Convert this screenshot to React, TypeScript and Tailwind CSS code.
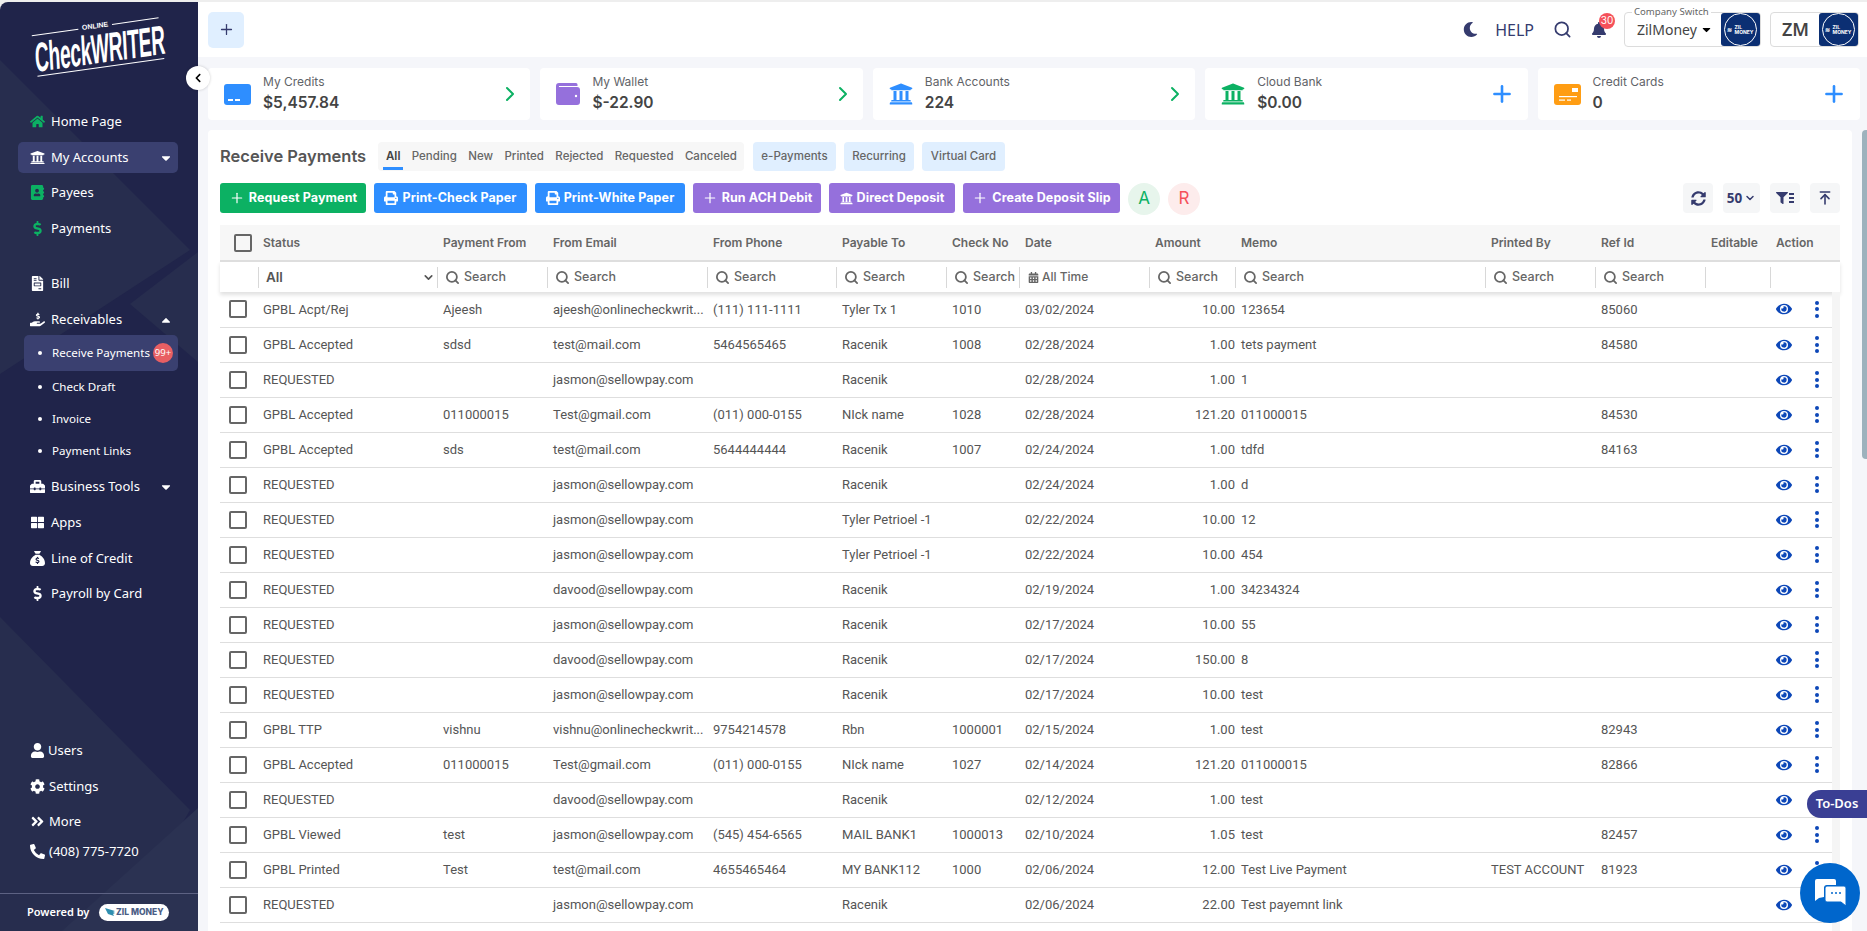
import {
  FaHome,
  FaUniversity,
  FaDollarSign,
  FaFileInvoice,
  FaHandHoldingUsd,
  FaToolbox,
  FaThLarge,
  FaUser,
  FaCog,
  FaAngleDoubleRight,
  FaPhoneAlt,
  FaPrint,
  FaMoon,
  FaBell,
  FaEye,
  FaSyncAlt,
  FaFilter,
  FaCaretDown,
  FaCaretUp,
  FaCalendarAlt,
  FaChevronLeft,
  FaAddressBook,
} from "react-icons/fa";
import { FaSackDollar } from "react-icons/fa6";
import { ChevronRight, ChevronDown, Plus, Search, ArrowUpToLine } from "lucide-react";

const COLS = [38, 179, 110, 160, 129, 110, 73, 130, 86, 250, 110, 110, 65];

const HEADERS = ["Status", "Payment From", "From Email", "From Phone", "Payable To", "Check No", "Date", "Amount", "Memo", "Printed By", "Ref Id", "Editable", "Action"];

const J = "jasmon@sellowpay.com";
const D = "davood@sellowpay.com";
const V = "vishnu@onlinecheckwrit...";

// status, from, email, phone, payable, check, date, amount, memo, printed, ref
const ROWS = [
  ["GPBL Acpt/Rej", "Ajeesh", "ajeesh@onlinecheckwrit...", "(111) 111-1111", "Tyler Tx 1", "1010", "03/02/2024", "10.00", "123654", "", "85060"],
  ["GPBL Accepted", "sdsd", "test@mail.com", "5464565465", "Racenik", "1008", "02/28/2024", "1.00", "tets payment", "", "84580"],
  ["REQUESTED", "", J, "", "Racenik", "", "02/28/2024", "1.00", "1", "", ""],
  ["GPBL Accepted", "011000015", "Test@gmail.com", "(011) 000-0155", "NIck name", "1028", "02/28/2024", "121.20", "011000015", "", "84530"],
  ["GPBL Accepted", "sds", "test@mail.com", "5644444444", "Racenik", "1007", "02/24/2024", "1.00", "tdfd", "", "84163"],
  ["REQUESTED", "", J, "", "Racenik", "", "02/24/2024", "1.00", "d", "", ""],
  ["REQUESTED", "", J, "", "Tyler Petrioel -1", "", "02/22/2024", "10.00", "12", "", ""],
  ["REQUESTED", "", J, "", "Tyler Petrioel -1", "", "02/22/2024", "10.00", "454", "", ""],
  ["REQUESTED", "", D, "", "Racenik", "", "02/19/2024", "1.00", "34234324", "", ""],
  ["REQUESTED", "", J, "", "Racenik", "", "02/17/2024", "10.00", "55", "", ""],
  ["REQUESTED", "", D, "", "Racenik", "", "02/17/2024", "150.00", "8", "", ""],
  ["REQUESTED", "", J, "", "Racenik", "", "02/17/2024", "10.00", "test", "", ""],
  ["GPBL TTP", "vishnu", V, "9754214578", "Rbn", "1000001", "02/15/2024", "1.00", "test", "", "82943"],
  ["GPBL Accepted", "011000015", "Test@gmail.com", "(011) 000-0155", "NIck name", "1027", "02/14/2024", "121.20", "011000015", "", "82866"],
  ["REQUESTED", "", D, "", "Racenik", "", "02/12/2024", "1.00", "test", "", ""],
  ["GPBL Viewed", "test", J, "(545) 454-6565", "MAIL BANK1", "1000013", "02/10/2024", "1.05", "test", "", "82457"],
  ["GPBL Printed", "Test", "test@mail.com", "4655465464", "MY BANK112", "1000", "02/06/2024", "12.00", "Test Live Payment", "TEST ACCOUNT", "81923"],
  ["REQUESTED", "", J, "", "Racenik", "", "02/06/2024", "22.00", "Test payemnt link", "", ""],
  // only the top of this row's checkbox is in the window
  ["", "", "", "", "", "", "", "", "", "", ""],
];

function Cols({ last }: { last: number }) {
  return (
    <colgroup>
      {COLS.map((w, i) => (
        <col key={i} style={{ width: w }} />
      ))}
      <col style={{ width: last }} />
    </colgroup>
  );
}

function ZilBadge() {
  return (
    <div className="flex h-[33px] w-[39px] items-center justify-center rounded-[3px] bg-[#0b2f73]">
      <div className="flex h-[33px] w-[33px] items-center justify-center rounded-full border border-white font-['Inter',sans-serif] text-[5px] font-bold leading-[5px] text-white">
        <span className="mr-[2px] text-[6px]">≋</span>
        <span>
          ZIL
          <br />
          MONEY
        </span>
      </div>
    </div>
  );
}

function NavItem({
  icon,
  label,
  green,
  active,
  caret,
  labelClass = "",
  className = "",
}: {
  icon: React.ReactNode;
  label: string;
  green?: boolean;
  active?: boolean;
  caret?: "up" | "down";
  labelClass?: string;
  className?: string;
}) {
  return (
    <div
      className={`ml-[18px] mr-[20px] flex h-[31px] items-center rounded-[5px] pl-[8px] pr-[5px] ${active ? "bg-[#3a4070]" : ""} ${className}`}
    >
      <span className={`flex w-[25px] shrink-0 justify-center pr-[3px] text-[15px] ${green ? "text-[#0cb163]" : "text-white"}`}>{icon}</span>
      <span className={`text-[13px] text-white ${labelClass}`}>{label}</span>
      {caret === "down" && <FaCaretDown className="ml-auto text-[14px] text-white" />}
      {caret === "up" && <FaCaretUp className="ml-auto text-[14px] text-white" />}
    </div>
  );
}

function SubItem({ label, active, badge }: { label: string; active?: boolean; badge?: string }) {
  return (
    <div className={`ml-[24px] mr-[20px] flex items-center rounded-[5px] pl-[14px] ${active ? "h-[36px] bg-[#3a4070]" : "h-[32px]"}`}>
      <span className="h-[4px] w-[4px] rounded-full bg-white" />
      <span className="ml-[10px] text-[11.6px] text-white">{label}</span>
      {badge && (
        <span className="ml-[3px] flex h-[20px] w-[20px] items-center justify-center rounded-full bg-[#e85f63] text-[9.5px] text-white">
          {badge}
        </span>
      )}
    </div>
  );
}

function Logo() {
  return (
    <div className="mx-auto mt-[20px] h-[64px] w-[128px] -rotate-[8deg] font-['Liberation_Sans',sans-serif] text-white">
      <div className="flex items-center">
        <span className="h-px flex-1 bg-white" />
        <span className="px-[4px] text-[7px] font-bold leading-[8px]">ONLINE</span>
        <span className="h-px flex-1 bg-white" />
      </div>
      <div className="h-[37px] origin-left whitespace-nowrap text-[41px] font-bold leading-[38px] tracking-[-0.5px] [transform:scaleX(0.47)_skewX(-10deg)]">
        CheckWRITER
      </div>
      <div className="h-px bg-white" />
    </div>
  );
}

function Sidebar() {
  return (
    <aside className="relative flex h-full w-[198px] shrink-0 flex-col overflow-hidden rounded-tl-[8px] bg-[#20244a] font-['Noto_Sans',sans-serif]">
      <svg className="absolute inset-0 h-full w-full" viewBox="0 0 198 929" preserveAspectRatio="none">
        <polygon points="0,58 190,248 0,372" fill="#272d4e" />
        <polygon points="198,250 130,302 198,360" fill="#272d4e" />
        <polygon points="0,615 190,808 120,929 0,929" fill="#272d4e" />
        <polygon points="198,806 62,929 198,929" fill="#2b3252" />
      </svg>
      <div className="relative flex h-full flex-col">
        <Logo />

        <div className="mt-[20px]">
          <NavItem icon={<FaHome />} label="Home Page" green className="mb-[5px]" />
          <NavItem icon={<FaUniversity />} label="My Accounts" active caret="down" className="mb-[4px]" />
          <NavItem icon={<FaAddressBook />} label="Payees" green className="mb-[5px]" />
          <NavItem icon={<FaDollarSign />} label="Payments" green className="mb-[24px]" />
          <NavItem icon={<FaFileInvoice />} label="Bill" className="mb-[5px]" />
          <NavItem icon={<FaHandHoldingUsd />} label="Receivables" caret="up" />
          <SubItem label="Receive Payments" active badge="99+" />
          <SubItem label="Check Draft" />
          <SubItem label="Invoice" />
          <SubItem label="Payment Links" />
          <NavItem icon={<FaToolbox />} label="Business Tools" caret="down" className="mt-[4px] mb-[5px]" />
          <NavItem icon={<FaThLarge className="text-[13px]" />} label="Apps" className="mb-[5px]" />
          <NavItem icon={<FaSackDollar />} label="Line of Credit" className="mb-[4px]" />
          <NavItem icon={<FaDollarSign />} label="Payroll by Card" />
        </div>

        <div className="mt-auto">
          <NavItem icon={<FaUser />} label="Users" labelClass="ml-[-3px]" className="mb-[5px]" />
          <NavItem icon={<FaCog />} label="Settings" labelClass="ml-[-2px]" className="mb-[4px]" />
          <NavItem icon={<FaAngleDoubleRight />} label="More" labelClass="ml-[-2px]" />
          <NavItem icon={<FaPhoneAlt />} label="(408) 775-7720" labelClass="ml-[-2px]" className="-mt-[1px]" />
          <div className="mt-[26px] flex h-[38px] items-center border-t border-[#5d6283] pl-[27px]">
            <span className="text-[11px] font-semibold text-white">Powered by</span>
            <span className="ml-[10px] flex h-[17px] w-[70px] items-center justify-center gap-[1px] rounded-full bg-white font-['Inter',sans-serif] text-[8.5px] font-extrabold text-[#4b5d85]">
              <svg width="10" height="9" viewBox="0 0 10 9">
                <path d="M0 0l10 3-2 1 2 1-2 1 1 2L3 6z" fill="#2f8fb0" />
              </svg>
              ZIL MONEY
            </span>
          </div>
        </div>
      </div>
    </aside>
  );
}

function Header() {
  return (
    <header className="flex h-[55px] shrink-0 items-center bg-white pl-[10px] pr-[8px]">
      <button className="flex h-[36px] w-[36px] items-center justify-center rounded-[5px] bg-[#e0efff] text-[#353b6e]">
        <Plus size={17} strokeWidth={1.8} />
      </button>
      <FaMoon className="ml-auto text-[15px] text-[#353b6e]" />
      <span className="ml-[17px] font-['Noto_Sans',sans-serif] text-[16px] text-[#353b6e]">HELP</span>
      <Search size={19} strokeWidth={2.2} className="ml-[19px] text-[#353b6e]" />
      <div className="relative ml-[19px]">
        <FaBell className="text-[16px] text-[#353b6e]" />
        <span className="absolute left-[8px] top-[-9px] flex h-[16px] w-[16px] items-center justify-center rounded-full bg-[#f5515a] text-[10px] text-white">
          30
        </span>
      </div>
      <div className="relative ml-[17px] flex h-[35px] w-[137px] items-center justify-between rounded-[4px] border border-[#dcdcdc] pl-[12px]">
        <span className="absolute left-[7px] top-[-7px] bg-white px-[2px] font-['Noto_Sans',sans-serif] text-[9.6px] leading-[12px] text-[#666]">
          Company Switch
        </span>
        <span className="flex items-center font-['Noto_Sans',sans-serif] text-[14px] text-[#444]">
          ZilMoney
          <FaCaretDown className="ml-[3px] text-[13px] text-black" />
        </span>
        <ZilBadge />
      </div>
      <div className="ml-[9px] flex h-[35px] w-[89px] items-center justify-between rounded-[4px] border border-[#dcdcdc] pl-[11px]">
        <span className="font-['Noto_Sans',sans-serif] text-[18px] font-semibold text-[#444]">ZM</span>
        <ZilBadge />
      </div>
    </header>
  );
}

function CreditsIcon() {
  return (
    <div className="flex h-[21px] w-[27px] items-end gap-[2px] rounded-[3px] bg-[#2e8eff] pb-[4px] pl-[4px]">
      <span className="h-[1.5px] w-[5px] bg-white" />
      <span className="h-[1.5px] w-[5px] bg-white" />
    </div>
  );
}

function WalletIcon() {
  return (
    <svg width="24" height="22" viewBox="0 0 24 22">
      <path d="M3 0h17a1.5 1.5 0 0 1 1.5 1.5V3H3a1.5 1.5 0 0 0 0 1h18a3 3 0 0 1 3 3v12a3 3 0 0 1-3 3H3a3 3 0 0 1-3-3V3a3 3 0 0 1 3-3z" fill="#9570dc" />
      <circle cx="20" cy="13" r="1.2" fill="#fff" />
    </svg>
  );
}

function CardIcon() {
  return (
    <svg width="27" height="21" viewBox="0 0 27 21">
      <rect width="27" height="21" rx="3" fill="#ff9d13" />
      <rect x="18" y="4" width="6" height="4" fill="#fff" />
      <rect x="5" y="12" width="18" height="1.2" fill="#fff" />
      <rect x="5" y="15.5" width="6" height="1.2" fill="#fff" />
      <rect x="13" y="15.5" width="4" height="1.2" fill="#fff" />
    </svg>
  );
}

function StatCard({ icon, label, value, action }: { icon: React.ReactNode; label: string; value: string; action: "go" | "add" }) {
  return (
    <div className="flex h-[52px] items-center rounded-[4px] bg-white pl-[16px] pr-[16px] font-['Inter',sans-serif]">
      <div className="flex justify-center">{icon}</div>
      <div className="ml-[12px] flex flex-col">
        <span className="text-[12px] leading-[16px] text-[#5f6368]">{label}</span>
        <span className="mt-[2px] text-[15.5px] font-semibold leading-[22px] text-[#444]">{value}</span>
      </div>
      {action === "go" ? (
        <ChevronRight size={24} strokeWidth={2} className="ml-auto mr-[-8px] text-[#0cb163]" />
      ) : (
        <Plus size={26} strokeWidth={2.4} className="ml-auto mr-[-3px] text-[#2e8eff]" />
      )}
    </div>
  );
}

function ActionButton({ icon, label, color, w }: { icon: React.ReactNode; label: string; color: string; w: string }) {
  return (
    <button className={`flex h-[30px] items-center justify-center gap-[4px] rounded-[3px] text-[12.5px] font-bold tracking-[0.1px] text-white ${color} ${w}`}>
      {icon}
      {label}
    </button>
  );
}

function ToolBtn({ children, w = "w-[30px]" }: { children: React.ReactNode; w?: string }) {
  return <div className={`flex h-[30px] ${w} items-center justify-center rounded-[4px] bg-[#f5f6f7] text-[#353b6e]`}>{children}</div>;
}

function SearchCell() {
  return (
    <div className="flex items-center gap-[4px] pl-[7px] text-[12.5px] font-medium text-[#666]">
      <Search size={15} strokeWidth={2.8} />
      <span>Search</span>
    </div>
  );
}

function Toolbar() {
  return (
    <>
      <div className="flex items-center">
        <h1 className="w-[158px] text-[16.5px] font-semibold text-[#555]">Receive Payments</h1>
        <div className="flex h-[29px] w-[366px] items-center justify-between rounded-[4px] bg-[#f7f7f7] pl-[8px] pr-[7px] text-[11.5px] font-medium text-[#666]">
          <span className="relative font-semibold text-[#444]">
            All
            <span className="absolute bottom-[-5px] left-[-3px] right-[-3px] h-[3px] bg-[#2e8eff]" />
          </span>
          <span>Pending</span>
          <span>New</span>
          <span>Printed</span>
          <span>Rejected</span>
          <span>Requested</span>
          <span>Canceled</span>
        </div>
        <div className="ml-[9px] flex gap-[8px] text-[11.5px] font-medium text-[#666]">
          <span className="flex h-[29px] w-[83px] items-center justify-center rounded-[4px] bg-[#e0efff]">e-Payments</span>
          <span className="flex h-[29px] w-[70px] items-center justify-center rounded-[4px] bg-[#e0efff]">Recurring</span>
          <span className="flex h-[29px] w-[83px] items-center justify-center rounded-[4px] bg-[#e0efff]">Virtual Card</span>
        </div>
      </div>
      <div className="mt-[12px] flex items-start gap-[8px]">
        <ActionButton icon={<Plus size={16} strokeWidth={1.8} />} label="Request Payment" color="bg-[#0cb163]" w="w-[146px]" />
        <ActionButton icon={<FaPrint className="text-[14px]" />} label="Print-Check Paper" color="bg-[#2e8eff]" w="w-[153px]" />
        <ActionButton icon={<FaPrint className="text-[14px]" />} label="Print-White Paper" color="bg-[#2e8eff]" w="w-[150px]" />
        <ActionButton icon={<Plus size={16} strokeWidth={1.8} />} label="Run ACH Debit" color="bg-[#9570dc]" w="w-[128px]" />
        <ActionButton icon={<FaUniversity className="text-[13px]" />} label="Direct Deposit" color="bg-[#9570dc]" w="w-[126px]" />
        <ActionButton icon={<Plus size={16} strokeWidth={1.8} />} label="Create Deposit Slip" color="bg-[#9570dc]" w="w-[157px]" />
        <span className="flex h-[32px] w-[32px] items-center justify-center rounded-full bg-[#e7f5ec] text-[17px] text-[#0cb163]">A</span>
        <span className="flex h-[32px] w-[32px] items-center justify-center rounded-full bg-[#fdecec] text-[17px] text-[#f5515a]">R</span>
        <div className="ml-auto flex gap-[10px]">
          <ToolBtn>
            <FaSyncAlt className="text-[15px]" />
          </ToolBtn>
          <ToolBtn w="w-[37px]">
            <span className="flex items-center font-['Noto_Sans',sans-serif] text-[13.5px] font-bold">
              50
              <ChevronDown size={12} strokeWidth={3} className="ml-[2px]" />
            </span>
          </ToolBtn>
          <ToolBtn>
            <span className="flex items-center">
              <FaFilter className="text-[12px]" />
              <span className="ml-[1px] flex flex-col gap-[2px]">
                <span className="h-[2px] w-[5px] bg-[#353b6e]" />
                <span className="h-[2px] w-[5px] bg-[#353b6e]" />
                <span className="h-[2px] w-[5px] bg-[#353b6e]" />
              </span>
            </span>
          </ToolBtn>
          <ToolBtn>
            <ArrowUpToLine size={16} strokeWidth={2.4} />
          </ToolBtn>
        </div>
      </div>
    </>
  );
}

function Checkbox({ big }: { big?: boolean }) {
  return <span className={`block h-[18px] w-[18px] rounded-[2px] border-[2px] border-[#666] ${big ? "ml-[14px]" : "ml-[9px]"}`} />;
}

function DataTable() {
  return (
    <div className="mt-[10px] w-[1620px]">
      <table className="w-[1620px] table-fixed border-collapse">
        <Cols last={70} />
        <thead>
          <tr className="h-[36px] border-b-2 border-[#dedede] bg-[#f7f7f7] text-left text-[12px] text-[#666]">
            <th className="p-0 font-semibold">
              <Checkbox big />
            </th>
            {HEADERS.map((h, i) => (
              <th key={h} className={`p-0 font-semibold ${i === 0 ? "pl-[5px]" : "pl-[6px]"}`}>
                {h}
              </th>
            ))}
          </tr>
          <tr className="h-[31px] shadow-[0_3px_4px_rgba(0,0,0,0.12)]">
            <th className="p-0" />
            <th className="p-0 text-left font-normal">
              <div className="flex h-[21px] items-center justify-between border-l border-[#d8d8d8] pl-[7px] pr-[2px] text-[13.5px] font-semibold text-[#555]">
                All
                <ChevronDown size={13} strokeWidth={3} />
              </div>
            </th>
            {HEADERS.slice(1).map((h) => (
              <th key={h} className="p-0 text-left font-normal">
                <div className="flex h-[21px] items-center border-l border-[#d8d8d8]">
                  {h === "Date" ? (
                    <div className="flex items-center gap-[3px] pl-[8px] text-[12px] font-medium text-[#666]">
                      <FaCalendarAlt className="text-[11px]" />
                      All Time
                    </div>
                  ) : h === "Editable" || h === "Action" ? null : (
                    <SearchCell />
                  )}
                </div>
              </th>
            ))}
          </tr>
        </thead>
      </table>
      <div className="flex">
        <table className="w-[1612px] table-fixed border-collapse font-['Roboto',sans-serif] text-[13px] text-[#555]">
          <Cols last={62} />
          <tbody>
            {ROWS.map((r, i) => (
              <tr key={i} className="h-[35px] border-b border-[#dedede]">
                <td className="p-0">
                  <Checkbox />
                </td>
                {r.map((c, j) =>
                  j === 7 ? (
                    <td key={j} className="p-0 text-right">
                      {c}
                    </td>
                  ) : (
                    <td key={j} className={`whitespace-nowrap p-0 ${j === 0 ? "pl-[5px]" : "pl-[6px]"}`}>
                      {c}
                    </td>
                  ),
                )}
                <td className="p-0" />
                <td className="p-0">
                  <div className="flex items-center text-[#0d47b8]">
                    <FaEye className="ml-[6px] text-[16px]" />
                    <span className="ml-[23px] flex flex-col gap-[2.5px]">
                      <span className="h-[4px] w-[4px] rounded-full bg-[#0d47b8]" />
                      <span className="h-[4px] w-[4px] rounded-full bg-[#0d47b8]" />
                      <span className="h-[4px] w-[4px] rounded-full bg-[#0d47b8]" />
                    </span>
                  </div>
                </td>
              </tr>
            ))}
          </tbody>
        </table>
        <div className="w-[8px] bg-[#f5f5f5]" />
      </div>
    </div>
  );
}

export default function App() {
  return (
    <div className="flex h-screen w-full overflow-hidden bg-[#eeeeee] pt-[2px] font-['Inter',sans-serif]">
      <Sidebar />
      <div className="relative flex min-w-0 flex-1 flex-col">
        <Header />
        <div className="flex-1 bg-[#f5f6fa] pl-[10px] pr-[7px] pt-[11px]">
          <div className="grid grid-cols-5 gap-[10px]">
            <StatCard icon={<CreditsIcon />} label="My Credits" value="$5,457.84" action="go" />
            <StatCard icon={<WalletIcon />} label="My Wallet" value="$-22.90" action="go" />
            <StatCard icon={<FaUniversity className="text-[24px] text-[#2e8eff]" />} label="Bank Accounts" value="224" action="go" />
            <StatCard icon={<FaUniversity className="text-[24px] text-[#0cb163]" />} label="Cloud Bank" value="$0.00" action="add" />
            <StatCard icon={<CardIcon />} label="Credit Cards" value="0" action="add" />
          </div>
          <section className="mt-[10px] h-[900px] w-[1644px] rounded-[4px] bg-white px-[12px] pt-[12px]">
            <Toolbar />
            <DataTable />
          </section>
        </div>
        {/* page scrollbar */}
        <div className="absolute right-0 top-[128px] h-[329px] w-[5px] rounded-l-[4px] bg-[#9db2bd]" />
        <div className="absolute right-0 top-[788px] flex h-[28px] w-[60px] items-center justify-center rounded-l-full bg-[#3a3f94] font-['Noto_Sans',sans-serif] text-[13px] font-semibold text-white">
          To-Dos
        </div>
        <div className="absolute bottom-[8px] right-[7px] flex h-[60px] w-[60px] items-center justify-center rounded-full bg-[#0066cc]">
          <svg width="32" height="30" viewBox="0 0 32 30">
            <path d="M3 1h17a2 2 0 0 1 2 2v4H13a3 3 0 0 0-3 3v9l-5 1-4 3V3a2 2 0 0 1 2-2z" fill="#fff" />
            <path d="M13 8h17a2 2 0 0 1 2 2v18l-5-4H13a2 2 0 0 1-2-2V10a2 2 0 0 1 2-2z" fill="#fff" stroke="#0066cc" />
            <circle cx="18" cy="15" r="1" fill="#0066cc" />
            <circle cx="22" cy="15" r="1" fill="#0066cc" />
            <circle cx="26" cy="15" r="1" fill="#0066cc" />
          </svg>
        </div>
      </div>
      <button className="absolute left-[186px] top-[66px] flex h-[24px] w-[24px] items-center justify-center rounded-full bg-white text-black shadow-[0_0_3px_rgba(0,0,0,0.2)]">
        <FaChevronLeft className="text-[10px]" />
      </button>
    </div>
  );
}
